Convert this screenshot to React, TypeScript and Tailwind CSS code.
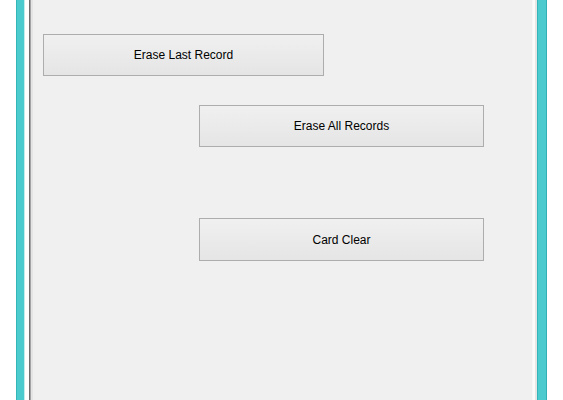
const buttonClass =
  "flex items-center justify-center border border-[#adadad] bg-gradient-to-b from-[#f0f0f0] to-[#e5e5e5] text-[12px] text-black leading-none"

function FormButton({ label, className }: { label: string; className: string }) {
  return (
    <button type="button" className={`${buttonClass} ${className}`}>
      {label}
    </button>
  )
}

export default function App() {
  return (
    <div
      className="flex h-[400px] w-[563px] overflow-hidden bg-white"
      style={{ fontFamily: '"Liberation Sans", Arial, sans-serif' }}
    >
      {/* window frame, left */}
      <div className="w-[16px] shrink-0 bg-white" />
      <div className="w-px shrink-0 bg-[#34b6b9]" />
      <div className="w-[7px] shrink-0 bg-[#4ccbce]" />
      <div className="w-px shrink-0 bg-[#c4ecec]" />
      <div className="w-[4px] shrink-0 bg-white" />
      <div className="w-px shrink-0 bg-[#6e6e6e]" />
      <div className="w-px shrink-0 bg-[#a3a3a3]" />
      <div className="w-[2px] shrink-0 bg-[#e4e4e4]" />

      {/* form body */}
      <div className="flex flex-1 flex-col items-start bg-[#f0f0f0]">
        <FormButton label="Erase Last Record" className="ml-[10px] mt-[34px] h-[42px] w-[281px]" />
        <FormButton label="Erase All Records" className="ml-[166px] mt-[29px] h-[42px] w-[285px]" />
        <FormButton label="Card Clear" className="ml-[166px] mt-[71px] h-[43px] w-[285px]" />
      </div>

      {/* window frame, right */}
      <div className="w-px shrink-0 bg-[#f7f7f7]" />
      <div className="w-[2px] shrink-0 bg-[#fdfafa]" />
      <div className="w-[2px] shrink-0 bg-[#e6e6e6]" />
      <div className="w-px shrink-0 bg-[#34b6b9]" />
      <div className="w-[8px] shrink-0 bg-[#4ccbce]" />
      <div className="w-px shrink-0 bg-[#30b0b3]" />
      <div className="w-[16px] shrink-0 bg-white" />
    </div>
  )
}
